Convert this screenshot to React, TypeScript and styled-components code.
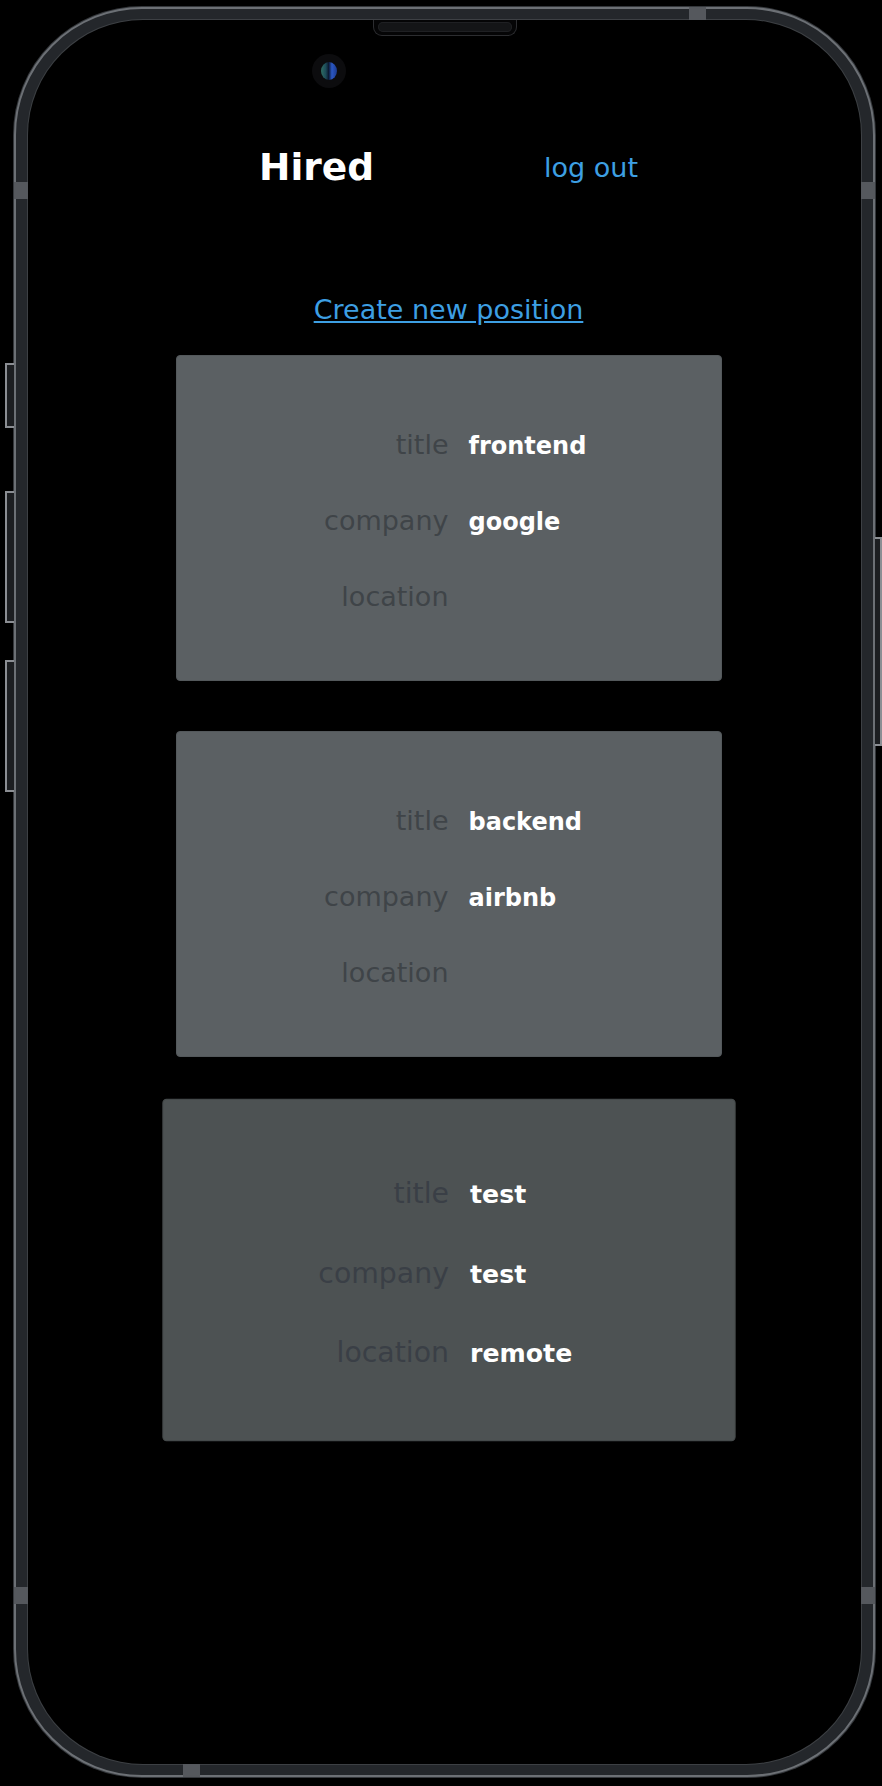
import React from 'react';
import styled, { createGlobalStyle } from 'styled-components';

const GlobalStyle = createGlobalStyle`
  html, body {
    margin: 0;
    padding: 0;
    background: #000;
  }
  body {
    font-family: 'DejaVu Sans', 'Liberation Sans', sans-serif;
  }
`;

const Stage = styled.div`
  width: 882px;
  height: 1786px;
  box-sizing: border-box;
  padding: 7px 0 0 14px;
  background: #000;
  overflow: hidden;
`;

const Device = styled.div`
  position: relative;
  width: 861px;
  height: 1770px;
`;

const Bezel = styled.div`
  box-sizing: border-box;
  width: 100%;
  height: 100%;
  padding: 11px 12px;
  border: 2px solid #6c7075;
  border-radius: 128px;
  background: #24272b;
  box-shadow: 0 0 0 1px #34373b;
`;

const Screen = styled.div`
  position: relative;
  box-sizing: border-box;
  height: 100%;
  padding: 125px 0 0 8px;
  border-radius: 115px;
  background: #000;
  box-shadow: 0 0 0 1px #3d4044;
  overflow: hidden;
`;

const SideButton = styled.div<{ $top: number; $height: number; $side: 'left' | 'right' }>`
  position: absolute;
  top: ${p => p.$top}px;
  height: ${p => p.$height}px;
  box-sizing: border-box;
  border: 2px solid #8b8e93;
  background: #1c1e21;
  ${p =>
    p.$side === 'left'
      ? 'left: -9px; width: 9px; border-right: none;'
      : 'right: -7px; width: 7px; border-left: none;'}
`;

const AntennaBand = styled.div<{ $edge: 'top' | 'bottom' | 'left' | 'right'; $at: number }>`
  position: absolute;
  background: #55585d;
  ${p => {
    switch (p.$edge) {
      case 'top':
        return `top: 0; left: ${p.$at}px; width: 17px; height: 13px;`;
      case 'bottom':
        return `bottom: 0; left: ${p.$at}px; width: 17px; height: 13px;`;
      case 'left':
        return `left: 0; top: ${p.$at}px; width: 14px; height: 17px;`;
      default:
        return `right: 0; top: ${p.$at}px; width: 14px; height: 17px;`;
    }
  }}
`;

const SpeakerHousing = styled.div`
  position: absolute;
  left: 345px;
  top: 0;
  width: 144px;
  height: 16px;
  box-sizing: border-box;
  padding: 2px 4px 3px;
  border: 1px solid #2c2d30;
  border-top: none;
  border-radius: 0 0 9px 9px;
  background: #050506;
`;

const SpeakerSlot = styled.div`
  height: 100%;
  border-radius: 5px;
  background: #141517;
  box-shadow: inset 0 0 0 1px #1f2023;
`;

const Camera = styled.div`
  position: absolute;
  left: 284px;
  top: 34px;
  width: 34px;
  height: 34px;
  border-radius: 50%;
  background: #0c0c0e;
  display: flex;
  align-items: center;
  justify-content: center;
`;

const Lens = styled.div`
  width: 16px;
  height: 18px;
  border-radius: 50%;
  background: linear-gradient(90deg, #2f6d62 0%, #1c4a58 30%, #0b1830 48%, #2b58c4 68%, #1c3a8e 100%);
`;

const Header = styled.header`
  display: flex;
  justify-content: center;
  align-items: center;
  gap: 170px;
`;

const Brand = styled.h1`
  margin: 0;
  font-size: 37.5px;
  font-weight: 700;
  color: #fff;
`;

const LogOut = styled.a`
  font-size: 27px;
  color: #3d9fe3;
  text-decoration: none;
  cursor: pointer;
`;

const NewPositionLink = styled.a`
  display: block;
  width: max-content;
  margin: 105px auto 0;
  font-size: 27px;
  color: #3d9fe3;
  text-decoration: underline;
  cursor: pointer;
`;

const CardList = styled.div`
  display: flex;
  flex-direction: column;
  align-items: center;
  gap: 50px;
  margin-top: 30px;
`;

const Card = styled.div<{ $active?: boolean }>`
  display: grid;
  row-gap: 45px;
  width: 546px;
  box-sizing: border-box;
  padding: 73px 0 68px;
  border: 1px solid ${p => (p.$active ? '#454a4b' : '#53585b')};
  border-radius: 4px;
  background: ${p => (p.$active ? '#4d5253' : '#5b6063')};
  transform: ${p => (p.$active ? 'scale(1.05)' : 'none')};
`;

const Row = styled.div`
  display: grid;
  grid-template-columns: 1fr 1fr;
  align-items: baseline;
`;

const Label = styled.span<{ $active?: boolean }>`
  text-align: right;
  font-size: 27px;
  color: ${p => (p.$active ? '#3a3f46' : '#3f4448')};
`;

const Value = styled.span`
  padding-left: 20px;
  font-size: 24px;
  font-weight: 700;
  color: #fff;
`;

type Position = {
  title: string;
  company: string;
  location: string;
  active?: boolean;
};

const positions: Position[] = [
  { title: 'frontend', company: 'google', location: '' },
  { title: 'backend', company: 'airbnb', location: '' },
  { title: 'test', company: 'test', location: 'remote', active: true },
];

const PositionCard: React.FC<{ position: Position }> = ({ position }) => (
  <Card $active={position.active}>
    <Row>
      <Label $active={position.active}>title</Label>
      <Value>{position.title}</Value>
    </Row>
    <Row>
      <Label $active={position.active}>company</Label>
      <Value>{position.company}</Value>
    </Row>
    <Row>
      <Label $active={position.active}>location</Label>
      <Value>{position.location}</Value>
    </Row>
  </Card>
);

const App: React.FC = () => (
  <>
    <GlobalStyle />
    <Stage>
      <Device>
        <SideButton $side="left" $top={356} $height={65} />
        <SideButton $side="left" $top={484} $height={132} />
        <SideButton $side="left" $top={653} $height={132} />
        <SideButton $side="right" $top={530} $height={209} />
        <Bezel>
          <Screen>
            <SpeakerHousing>
              <SpeakerSlot />
            </SpeakerHousing>
            <Camera>
              <Lens />
            </Camera>
            <Header>
              <Brand>Hired</Brand>
              <LogOut>log out</LogOut>
            </Header>
            <NewPositionLink>Create new position</NewPositionLink>
            <CardList>
              {positions.map(p => (
                <PositionCard key={p.title + p.company} position={p} />
              ))}
            </CardList>
          </Screen>
        </Bezel>
        <AntennaBand $edge="top" $at={675} />
        <AntennaBand $edge="bottom" $at={169} />
        <AntennaBand $edge="left" $at={175} />
        <AntennaBand $edge="right" $at={175} />
        <AntennaBand $edge="left" $at={1580} />
        <AntennaBand $edge="right" $at={1580} />
      </Device>
    </Stage>
  </>
);

export default App;
